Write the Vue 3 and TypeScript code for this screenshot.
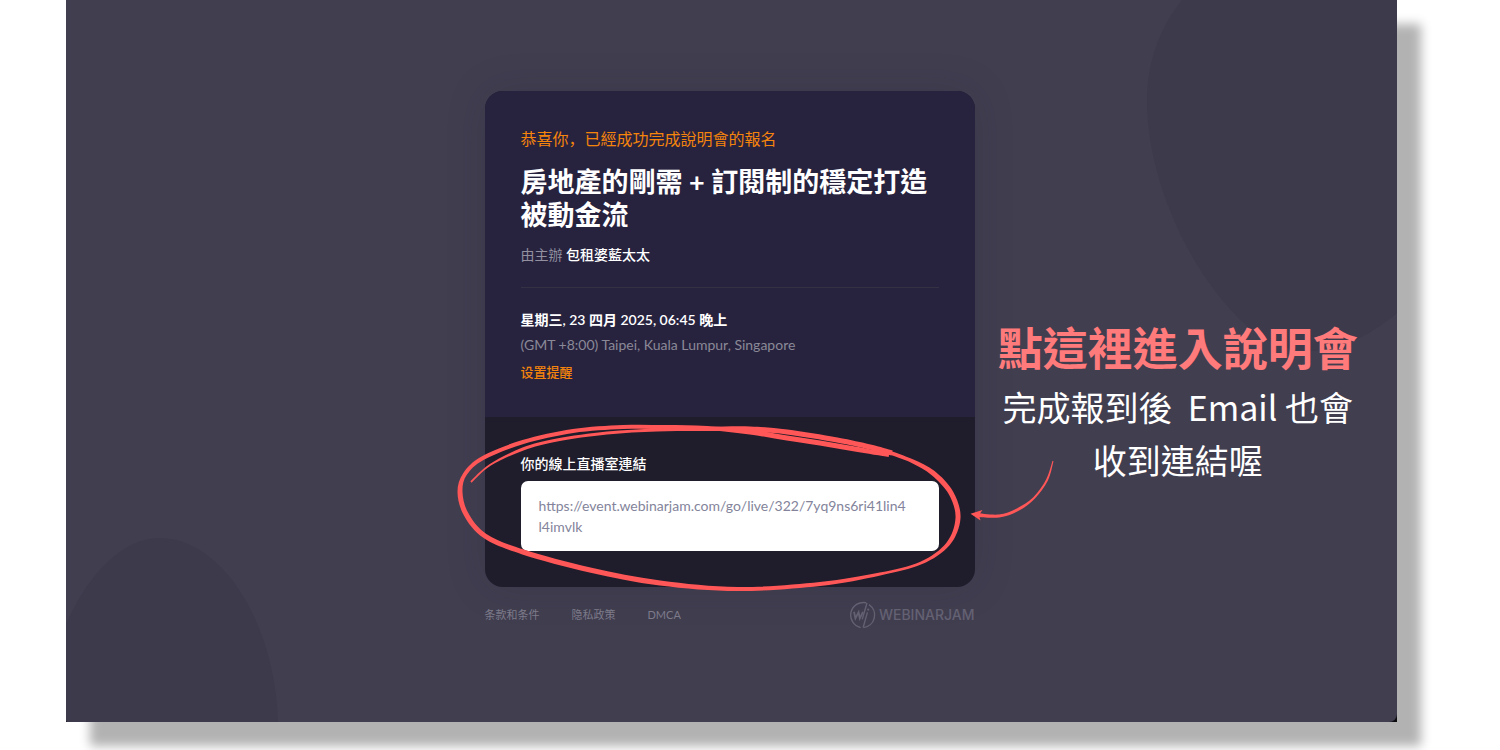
<script setup lang="ts">
import { ref } from 'vue'

type StrokePoint = [x: number, y: number, width: number]
type Point = [x: number, y: number]

const liveRoomUrl = ref('https://event.webinarjam.com/go/live/322/7yq9ns6ri41lin4l4imvlk')

/* Smooth curve through the points, as cubic segments */
function curve(points: Point[]): string {
  let d = ''
  for (let i = 0; i < points.length - 1; i++) {
    const a = points[Math.max(i - 1, 0)]
    const b = points[i]
    const c = points[i + 1]
    const e = points[Math.min(i + 2, points.length - 1)]
    const c1 = [b[0] + (c[0] - a[0]) / 6, b[1] + (c[1] - a[1]) / 6]
    const c2 = [c[0] - (e[0] - b[0]) / 6, c[1] - (e[1] - b[1]) / 6]
    d += `C${c1.join(' ')} ${c2.join(' ')} ${c.join(' ')}`
  }
  return d
}

/* Brush stroke whose width varies along its length */
function brush(points: StrokePoint[]): string {
  const left: Point[] = []
  const right: Point[] = []
  points.forEach(([x, y, w], i) => {
    const p = points[Math.max(i - 1, 0)]
    const n = points[Math.min(i + 1, points.length - 1)]
    const dx = n[0] - p[0]
    const dy = n[1] - p[1]
    const len = Math.hypot(dx, dy)
    left.push([x - (dy / len) * (w / 2), y + (dx / len) * (w / 2)])
    right.push([x + (dy / len) * (w / 2), y - (dx / len) * (w / 2)])
  })
  right.reverse()
  return `M${left[0].join(' ')}${curve(left)}L${right[0].join(' ')}${curve(right)}Z`
}

const loop = brush([
  [889, 455, 4], [855, 449, 5], [820, 443, 5], [787, 438, 5], [750, 432, 5], [707, 428, 4],
  [665, 427, 4], [623, 427, 4], [573, 431, 4], [523, 442, 4], [483, 458, 4], [465, 474, 4],
  [460, 492, 5], [466, 514, 5], [485, 536, 5], [523, 552, 5], [590, 570, 5], [660, 583, 5],
  [738, 589, 4], [820, 584, 4], [880, 574, 3], [921, 563, 3], [948, 544, 4], [958, 518, 5],
  [951, 493, 5], [933, 473, 5], [912, 461, 4], [888, 452, 4],
])
const tail = brush([
  [471, 482, 2], [490, 465, 2], [523, 449, 3], [557, 440, 3], [607, 433, 3], [657, 430, 3],
  [707, 429, 4], [750, 429, 5], [787, 432, 5], [837, 440, 5], [870, 447, 5], [892, 453, 5],
])
const arrow = brush([
  [1053, 461, 1], [1047, 480, 2], [1034, 498, 2], [1017, 510, 3], [999, 516, 3], [976, 515, 4],
])
</script>

<template>
  <main class="stage">
    <div class="frame">
      <div class="screen">
        <svg class="blob blob-top" width="250" height="360" viewBox="1147 0 250 360" aria-hidden="true">
          <path d="M1182 0C1158 30 1147 65 1147 100C1147 180 1190 275 1247 326C1290 362 1340 360 1397 313V0Z" />
        </svg>
        <svg class="blob blob-bottom" width="212" height="184" viewBox="66 538 212 184" aria-hidden="true">
          <path d="M66 624C90 570 125 538 160 538C220 538 275 620 278 722H66Z" />
        </svg>

        <div class="column">
          <article class="card">
            <header class="summary">
              <p class="congrats" lang="zh-Hans">恭喜你，已經成功完成說明會的報名</p>
              <h1>房地產的剛需 + 訂閱制的穩定打造被動金流</h1>
              <p class="host">由主辦 <strong>包租婆藍太太</strong></p>
              <hr />
              <p class="date">星期三, 23 四月 2025, 06:45 晚上</p>
              <p class="zone">(GMT +8:00) Taipei, Kuala Lumpur, Singapore</p>
              <a class="reminder" href="#">设置提醒</a>
            </header>
            <section class="room">
              <label for="room-url">你的線上直播室連結</label>
              <textarea id="room-url" v-model="liveRoomUrl" rows="2" readonly spellcheck="false"></textarea>
            </section>
          </article>

          <footer class="footer">
            <nav>
              <a href="#">条款和条件</a>
              <a href="#">隐私政策</a>
              <a href="#">DMCA</a>
            </nav>
            <div class="brand">
              <svg width="28" height="28" viewBox="0 0 28 28" aria-hidden="true">
                <path d="M18.2 1.8A12.6 12.6 0 1 0 12.6 26.6" />
                <path d="M21 3.6A12.6 12.6 0 0 1 15.4 26.6" />
                <path d="M19 2L14.2 18.4" />
                <path d="M19.4 11.4L15.2 26.4" />
                <path class="mark" d="M6 10.8L7.4 17.4L10.6 11.2L11.8 17.4L15 10.8" />
                <circle class="dot" cx="20.2" cy="8.6" r="1.1" />
              </svg>
              <span>WEBINARJAM</span>
            </div>
          </footer>

          <svg class="marker" width="620" height="190" viewBox="450 410 620 190" aria-hidden="true">
            <path :d="loop" />
            <path :d="tail" />
            <path :d="arrow" />
            <path d="M970.5 513.8L982.5 510L979 515L980.5 520.5Z" />
          </svg>
        </div>

        <aside class="callout">
          <h2>點這裡進入說明會</h2>
          <p>完成報到後&nbsp; Email 也會<br />收到連結喔</p>
        </aside>
      </div>
    </div>
  </main>
</template>

<style>
body {
  margin: 0;
  background: #fff;
}
</style>

<style scoped>
.stage {
  box-sizing: border-box;
  min-height: 100vh;
  padding: 0 103px 28px 66px;
  overflow: hidden;
  display: flex;
  font-family: Lato, "Noto Sans CJK TC", sans-serif;
}

.frame {
  flex: 1;
  display: flex;
  background: #0c0c10;
  box-shadow: 24px 24px 10px rgba(0, 0, 0, 0.3);
}

.screen {
  position: relative;
  flex: 1;
  box-sizing: border-box;
  display: grid;
  grid-template-columns: 1fr minmax(0, 490px) 1fr;
  align-items: start;
  padding: 91px 4px 0 0;
  border-radius: 0 0 8px 2px;
  overflow: hidden;
  background: #413e50;
}

.blob {
  position: absolute;
  fill: #3d3a4c;
}

.blob-top {
  top: 0;
  right: 0;
}

.blob-bottom {
  bottom: 0;
  left: 0;
}

.column {
  position: relative;
  grid-column: 2;
}

.card {
  border-radius: 18px;
  overflow: hidden;
  background: #1f1d2b;
  box-shadow: 0 0 40px rgba(30, 28, 44, 0.15);
}

.summary {
  padding: 36px 36px 34px;
  background: #27233f;
  color: #fff;
}

p,
h1,
h2 {
  margin: 0;
}

.congrats {
  font-family: Lato, "Noto Sans CJK SC", sans-serif;
  font-size: 16px;
  line-height: 24px;
  color: #f5840c;
}

h1 {
  margin-top: 14px;
  font-size: 27px;
  line-height: 33px;
  font-weight: 700;
}

.host {
  margin-top: 13px;
  font-size: 14px;
  line-height: 22px;
  color: #9391a0;
}

.host strong {
  font-weight: 500;
  color: #fff;
}

hr {
  margin: 21px 0;
  border: 0;
  border-top: 1px solid #353145;
}

.date {
  font-size: 14px;
  line-height: 22px;
  font-weight: 600;
}

.zone {
  margin-top: 3px;
  font-size: 14px;
  line-height: 22px;
  color: #8b8997;
}

.reminder {
  display: block;
  width: max-content;
  margin-top: 5px;
  font-family: Lato, "Noto Sans CJK SC", sans-serif;
  font-size: 13px;
  line-height: 22px;
  font-weight: 500;
  color: #f5840c;
  text-decoration: none;
}

.room {
  padding: 36px;
}

.room label {
  display: block;
  margin-bottom: 6px;
  font-size: 14px;
  line-height: 22px;
  font-weight: 500;
  color: #fff;
}

.room textarea {
  display: block;
  box-sizing: border-box;
  width: 100%;
  padding: 14px 30px 14px 18px;
  border: 0;
  border-radius: 7px;
  outline: 0;
  resize: none;
  overflow: hidden;
  background: #fff;
  font-family: inherit;
  font-size: 14px;
  line-height: 21px;
  word-break: break-all;
  color: #83849b;
}

.footer {
  display: flex;
  justify-content: space-between;
  align-items: center;
  margin-top: 14px;
  color: #7d7b8a;
}

.footer nav {
  display: flex;
  gap: 32px;
}

.footer a {
  font-family: Lato, "Noto Sans CJK SC", sans-serif;
  font-size: 11px;
  line-height: 16px;
  color: inherit;
  text-decoration: none;
}

.brand {
  display: flex;
  align-items: center;
  gap: 3px;
  font-family: Inter, sans-serif;
  font-size: 14px;
  line-height: 20px;
  font-weight: 500;
  color: #646173;
}

.brand path {
  fill: none;
  stroke: currentColor;
  stroke-width: 1.4;
}

.brand .mark {
  stroke-width: 1.8;
}

.brand .dot {
  fill: currentColor;
}

.marker {
  position: absolute;
  top: 319px;
  left: -35px;
  fill: #ff5757;
  pointer-events: none;
}

.callout {
  position: relative;
  margin-top: 228px;
  padding-right: 12px;
  font-family: "Noto Sans CJK TC", sans-serif;
  text-align: center;
  white-space: nowrap;
}

.callout h2 {
  font-size: 45px;
  line-height: 56px;
  font-weight: 700;
  color: #ff7a7a;
}

.callout p {
  margin-top: 5px;
  font-size: 34px;
  line-height: 53px;
  font-weight: 400;
  color: #fff;
}
</style>
